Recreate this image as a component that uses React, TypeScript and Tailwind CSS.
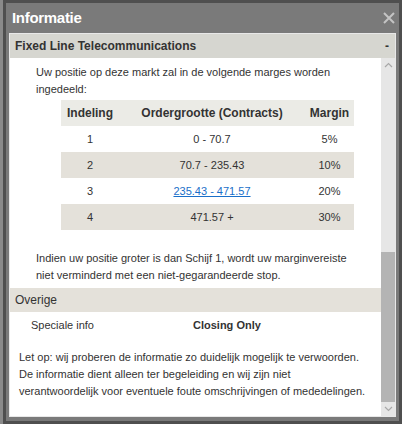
const rows = [
  { tier: "1", size: "0 - 70.7", margin: "5%", shaded: false, link: false },
  { tier: "2", size: "70.7 - 235.43", margin: "10%", shaded: true, link: false },
  { tier: "3", size: "235.43 - 471.57", margin: "20%", shaded: false, link: true },
  { tier: "4", size: "471.57 +", margin: "30%", shaded: true, link: false },
];

function Chevron({ up }: { up?: boolean }) {
  return (
    <svg width="9" height="6" viewBox="0 0 9 6" className={up ? "" : "rotate-180"}>
      <path d="M1 5 L4.5 1.5 L8 5" fill="none" stroke="#a8a8a8" strokeWidth="1.2" />
    </svg>
  );
}

export default function App() {
  return (
    <div className="h-[424px] w-[402px] overflow-hidden bg-[#8a8a8a] font-['Liberation_Sans',Arial,sans-serif] text-[#333]">
      <div className="ml-[3px] flex h-[424px] w-[399px] flex-col border-[3px] border-[#4f4f4f] bg-[#7a7a7a]">
        {/* title bar */}
        <div className="flex h-[30px] shrink-0 items-center justify-between pl-[6px] pr-[4px]">
          <span className="text-[15px] font-bold tracking-[-0.3px] text-white">Informatie</span>
          <svg width="12" height="12" viewBox="0 0 12 12">
            <path d="M1 1 L11 11 M11 1 L1 11" stroke="#c4c4c4" strokeWidth="2" />
          </svg>
        </div>

        {/* panel */}
        <div className="mx-[3px] flex min-h-0 flex-1 flex-col border border-[#e8e8e8] bg-white">
          <div className="flex h-[24px] shrink-0 items-center justify-between bg-[#d6d6d0] pl-[5px] pr-[6px]">
            <span className="text-[12px] font-bold">Fixed Line Telecommunications</span>
            <span className="text-[12px] font-bold">-</span>
          </div>

          <div className="flex min-h-0 flex-1">
            <div className="min-w-0 flex-1 overflow-hidden">
              <div className="pl-[26px] pr-[10px] pt-[6px] text-[11px] leading-[17px]">
                <p>Uw positie op deze markt zal in de volgende marges worden ingedeeld:</p>
                <table className="mt-[2px] ml-[25px] w-[293px] border-collapse text-center text-[11px]">
                  <thead>
                    <tr className="h-[26px] bg-[#ebebe6] text-[12px]">
                      <th className="w-[58px] font-bold">Indeling</th>
                      <th className="w-[186px] font-bold">Ordergrootte (Contracts)</th>
                      <th className="font-bold">Margin</th>
                    </tr>
                  </thead>
                  <tbody>
                    {rows.map((r) => (
                      <tr key={r.tier} className={r.shaded ? "h-[26px] bg-[#e4e1da]" : "h-[26px] bg-white"}>
                        <td>{r.tier}</td>
                        <td>
                          {r.link ? (
                            <a href="#" className="text-[#1a6fc9] underline">
                              {r.size}
                            </a>
                          ) : (
                            r.size
                          )}
                        </td>
                        <td>{r.margin}</td>
                      </tr>
                    ))}
                  </tbody>
                </table>
                <p className="mt-[20px] w-[322px]">
                  Indien uw positie groter is dan Schijf 1, wordt uw marginvereiste niet verminderd met een
                  niet-gegarandeerde stop.
                </p>
              </div>

              <div className="mt-[4px] flex h-[24px] items-center bg-[#e4e1da] pl-[5px] text-[12px]">Overige</div>
              <div className="flex h-[26px] items-center pl-[21px] text-[11px]">
                <span className="w-[162px]">Speciale info</span>
                <span className="font-bold">Closing Only</span>
              </div>
              <p className="mt-[11px] w-[361px] pl-[9px] text-[11px] leading-[17px]">
                Let op: wij proberen de informatie zo duidelijk mogelijk te verwoorden. De informatie dient alleen ter
                begeleiding en wij zijn niet verantwoordelijk voor eventuele foute omschrijvingen of mededelingen.
              </p>
            </div>

            {/* scrollbar */}
            <div className="flex w-[14px] shrink-0 flex-col bg-[#e6e6e6]">
              <div className="flex h-[14px] items-center justify-center">
                <Chevron up />
              </div>
              <div className="flex flex-1 flex-col">
                <div className="h-[180px]" />
                <div className="flex-1 bg-[#b4b4b4]" />
              </div>
              <div className="flex h-[14px] items-center justify-center">
                <Chevron />
              </div>
            </div>
          </div>
        </div>
        <div className="h-[4px] shrink-0" />
      </div>
    </div>
  );
}
